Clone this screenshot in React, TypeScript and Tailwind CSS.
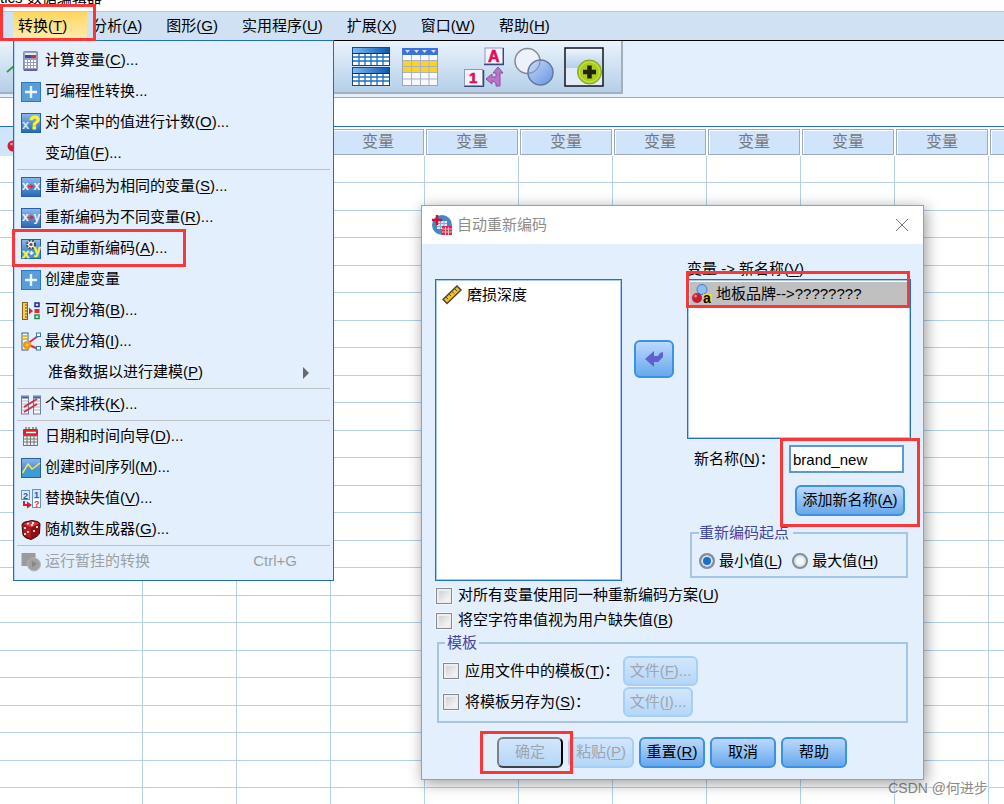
import { Fragment, useState } from "react";
import type { ReactNode } from "react";
import clsx from "clsx";

interface MnemonicProps {
  text: string;
  k?: string;
  tail?: string;
}

// Label with an underlined access key, e.g. 转换(T)
function Mnemonic({ text, k, tail }: MnemonicProps) {
  return (
    <span className="whitespace-nowrap">
      {text}
      {k && (
        <>
          (<u className="underline decoration-1 underline-offset-2">{k}</u>)
        </>
      )}
      {tail}
    </span>
  );
}

// Menu icons
function Icon({ children, className }: { children: ReactNode; className?: string }) {
  return (
    <svg viewBox="0 0 20 20" className={clsx("size-5 shrink-0", className)} aria-hidden="true">
      {children}
    </svg>
  );
}

function BlueTile({ children }: { children: ReactNode }) {
  return (
    <Icon>
      <defs>
        <linearGradient id="tile" x1="0" y1="0" x2="0" y2="1">
          <stop offset="0" stopColor="#8db8ea" />
          <stop offset="1" stopColor="#2468b4" />
        </linearGradient>
      </defs>
      <rect x="0.5" y="0.5" width="19" height="19" fill="url(#tile)" stroke="#2460ae" />
      {children}
    </Icon>
  );
}

function CalculatorIcon() {
  return (
    <Icon>
      <rect x="2.5" y="0.5" width="14" height="19" rx="1" fill="#9a9cc8" stroke="#8a8cba" />
      <rect x="4" y="2" width="11" height="5" fill="#f4e8d8" />
      <rect x="4" y="4" width="6" height="3" fill="#2d4f9e" />
      <rect x="10" y="4" width="5" height="3" fill="#d92b25" />
      {[9, 12, 15].map((y) =>
        [4, 7, 10, 13].map((x) => <rect key={`${x}-${y}`} x={x} y={y} width="2" height="2" fill="#fff" />),
      )}
      <path d="M3 19h13" stroke="#56588c" strokeWidth="1.5" />
    </Icon>
  );
}

function PlusIcon() {
  return (
    <Icon>
      <rect x="0.5" y="0.5" width="19" height="19" fill="#5b9dd8" stroke="#2a78c8" />
      <path d="M10 4v12M4 10h12" stroke="#e8f4ff" strokeWidth="2.4" />
    </Icon>
  );
}

function CountIcon() {
  return (
    <BlueTile>
      <text x="1" y="16" fontSize="13" fontWeight="bold" fill="#d5e4f3">x</text>
      <text x="8" y="16" fontSize="18" fontWeight="bold" fill="#fdf22f" stroke="#fdf22f" strokeWidth="0.8">?</text>
    </BlueTile>
  );
}

function RecodeIcon({ to }: { to: string }) {
  return (
    <BlueTile>
      <text x="1" y="13" fontSize="12" fontWeight="bold" fill="#eef2f6">x</text>
      <text x="12.5" y="13" fontSize="12" fontWeight="bold" fill="#eef2f6">{to}</text>
      <path d="M7 9.5h4" stroke="#e02b35" strokeWidth="1.5" />
      <path d="M9.5 7l4 2.5-4 2.5z" fill="#e02b35" />
    </BlueTile>
  );
}

function AutoRecodeIcon() {
  return (
    <BlueTile>
      <rect x="1" y="10" width="18" height="9" fill="#3f95d3" />
      <circle cx="10" cy="5.5" r="4" fill="#f2f2ee" stroke="#454a50" strokeWidth="2" strokeDasharray="2 1.2" />
      <circle cx="10" cy="5.5" r="1.6" fill="#555" />
      <text x="1" y="18.5" fontSize="13" fontWeight="bold" fill="#f7f23a" stroke="#f7f23a" strokeWidth="0.5">x</text>
      <text x="12.5" y="15" fontSize="13" fontWeight="bold" fill="#f7f23a" stroke="#f7f23a" strokeWidth="0.5">y</text>
      <path d="M8.5 14h4M10.5 12v4" stroke="#fff" strokeWidth="1.5" />
    </BlueTile>
  );
}

function VisualBinIcon() {
  return (
    <Icon>
      <rect x="1.5" y="1.5" width="5" height="17" fill="#f5cd55" stroke="#80641c" />
      <path d="M4 4h2M4 7h2M4 10h2M4 13h2M4 16h2" stroke="#6b5312" />
      <path d="M8 6.5l4 3.5-4 3.5z" fill="#cb2936" />
      <rect x="14" y="2" width="4" height="3.5" fill="none" stroke="#1b2a92" strokeWidth="1.5" />
      <rect x="13.5" y="8" width="5" height="4" fill="#e52a3b" />
      <rect x="14" y="14" width="4" height="3.5" fill="none" stroke="#189040" strokeWidth="1.5" />
    </Icon>
  );
}

function OptimalBinIcon() {
  return (
    <Icon>
      <rect x="1" y="1" width="6" height="17" fill="#f8f6ee" stroke="#33639b" />
      <path d="M1.5 4h5M1.5 7h5" stroke="#e5b83d" strokeWidth="2" />
      <path d="M17 4L6 12l11 5" fill="none" stroke="#e02a50" strokeWidth="2" />
      <circle cx="6" cy="13" r="4" fill="#f99312" />
      <circle cx="6" cy="13" r="1.5" fill="#ffe14a" />
      <rect x="15.5" y="1" width="4" height="3.5" fill="#fff" stroke="#3774b5" />
      <rect x="15.5" y="14.5" width="4" height="3.5" fill="#fff" stroke="#3774b5" />
    </Icon>
  );
}

function RankIcon() {
  return (
    <Icon>
      <rect x="0.5" y="1" width="7" height="18" fill="#f5f7fa" stroke="#6b7fa8" />
      <rect x="12.5" y="1" width="7" height="18" fill="#f5f7fa" stroke="#6b7fa8" />
      <path d="M1 2.5h6M13 2.5h6" stroke="#3f5f9d" strokeWidth="2" />
      <path d="M1 6h6M1 9h6M1 12h6M1 15h6M13 6h6M13 9h6M13 12h6M13 15h6" stroke="#aab4c6" />
      <path d="M3 12L16 4M3 17l13-8" stroke="#d42b37" strokeWidth="2" />
    </Icon>
  );
}

function CalendarIcon() {
  return (
    <Icon>
      <path d="M5 0v4M8 0v2M12 0v2M15 0v4" stroke="#8f7a50" strokeWidth="1.5" />
      <rect x="2" y="2" width="15" height="7" rx="1" fill="#d6222d" />
      <path d="M5 5.5h10" stroke="#fff" strokeWidth="1.5" />
      <rect x="2.5" y="9" width="14" height="9.5" fill="#f2f2f2" stroke="#777" />
      <path d="M6 9v9M9.5 9v9M13 9v9M3 12h13M3 15h13" stroke="#777" />
    </Icon>
  );
}

function SeriesIcon() {
  return (
    <BlueTile>
      <rect x="1" y="11" width="18" height="8" fill="#3e9bd4" />
      <path d="M1.5 15L7 6l4 5 3-2 5-4" fill="none" stroke="#f1ee49" strokeWidth="1.5" />
    </BlueTile>
  );
}

function MissingIcon() {
  return (
    <Icon>
      <rect x="0.5" y="1.5" width="8" height="9" fill="#dfeaf6" stroke="#5e94d0" />
      <rect x="11.5" y="0.5" width="8" height="18" fill="#fff" stroke="#5e94d0" />
      <rect x="12" y="1" width="7" height="9" fill="#d5e5f5" />
      <text x="2" y="9.5" fontSize="9" fontWeight="bold" fill="#1f5baa">2</text>
      <text x="13" y="9" fontSize="9" fontWeight="bold" fill="#1f5baa">1</text>
      <text x="13" y="18" fontSize="9" fontWeight="bold" fill="#e52a37">?</text>
      <path d="M3 12v4h4" fill="none" stroke="#d3202f" strokeWidth="2" />
      <path d="M6 12.5l5 3.5-5 3.5z" fill="#d3202f" />
    </Icon>
  );
}

function DiceIcon() {
  return (
    <Icon>
      <path d="M1 5Q1 3 4 2l7-1.5Q18 1 19 3.5L18.5 13Q18 16 10 19.5 3 18 2 15z" fill="#8c1014" stroke="#3f0a0b" />
      <path d="M2 4l9-3 7 2.5-8 4z" fill="#dd3d41" />
      <path d="M1.5 5l8.500 3v10.5L3 15z" fill="#b81a20" />
      {[[7, 3.5], [12, 3], [11, 5], [4, 8], [7, 12], [4, 14], [13, 11], [16, 7]].map(([x, y]) => (
        <circle key={`${x}-${y}`} cx={x} cy={y} r="1.1" fill="#fff" />
      ))}
    </Icon>
  );
}

function PendingIcon() {
  return (
    <Icon>
      <rect x="0.5" y="1" width="14" height="13" fill="#9b9b9b" />
      <circle cx="13" cy="12.5" r="6.5" fill="#a0a0a0" stroke="#b8b8b8" />
      <path d="M11 9l5 3-5 3z" fill="#858585" />
    </Icon>
  );
}

interface MenuEntry extends MnemonicProps {
  icon?: ReactNode;
  submenu?: boolean;
  shortcut?: string;
  disabled?: boolean;
}

const MENU_GROUPS: MenuEntry[][] = [
  [
    { text: "计算变量", k: "C", tail: "...", icon: <CalculatorIcon /> },
    { text: "可编程性转换", tail: "...", icon: <PlusIcon /> },
    { text: "对个案中的值进行计数", k: "O", tail: "...", icon: <CountIcon /> },
    { text: "变动值", k: "F", tail: "..." },
  ],
  [
    { text: "重新编码为相同的变量", k: "S", tail: "...", icon: <RecodeIcon to="x" /> },
    { text: "重新编码为不同变量", k: "R", tail: "...", icon: <RecodeIcon to="y" /> },
    { text: "自动重新编码", k: "A", tail: "...", icon: <AutoRecodeIcon /> },
    { text: "创建虚变量", icon: <PlusIcon /> },
    { text: "可视分箱", k: "B", tail: "...", icon: <VisualBinIcon /> },
    { text: "最优分箱", k: "I", tail: "...", icon: <OptimalBinIcon /> },
    { text: "准备数据以进行建模", k: "P", submenu: true },
  ],
  [{ text: "个案排秩", k: "K", tail: "...", icon: <RankIcon /> }],
  [
    { text: "日期和时间向导", k: "D", tail: "...", icon: <CalendarIcon /> },
    { text: "创建时间序列", k: "M", tail: "...", icon: <SeriesIcon /> },
    { text: "替换缺失值", k: "V", tail: "...", icon: <MissingIcon /> },
    { text: "随机数生成器", k: "G", tail: "...", icon: <DiceIcon /> },
  ],
  [{ text: "运行暂挂的转换", shortcut: "Ctrl+G", disabled: true, icon: <PendingIcon /> }],
];

function TransformMenu() {
  return (
    <div
      role="menu"
      className="absolute top-10 left-[13px] z-10 w-[321px] border border-[#1d6fc0] bg-[#e3effc] pt-1 pb-[3px] shadow-[inset_1px_0_0_#b9d4f1]"
    >
      {MENU_GROUPS.map((group, i) => (
        <Fragment key={i}>
          {i > 0 && <hr className="mx-[3px] border-t border-[#bdc1c6] first-of-type:mb-px" />}
          {group.map((item) => (
            <button
              key={item.text}
              role="menuitem"
              disabled={item.disabled}
              className="flex h-[31px] w-full items-center gap-1 pr-6 pl-[7px] text-left text-black disabled:text-[#9c9fa3]"
            >
              {item.icon ?? <span className={clsx("h-5 shrink-0", item.submenu ? "w-[23px]" : "w-5")} />}
              <span className="flex-1">
                <Mnemonic text={item.text} k={item.k} tail={item.tail} />
              </span>
              {item.shortcut && <span className="pr-3">{item.shortcut}</span>}
              {item.submenu && (
                <svg viewBox="0 0 6 12" className="h-3 w-1.5" aria-hidden="true">
                  <path d="M0 0l6 6-6 6z" fill="#66696d" />
                </svg>
              )}
            </button>
          ))}
        </Fragment>
      ))}
    </div>
  );
}

const MENU_BAR = [
  { text: "转换", k: "T" },
  { text: "分析", k: "A" },
  { text: "图形", k: "G" },
  { text: "实用程序", k: "U" },
  { text: "扩展", k: "X" },
  { text: "窗口", k: "W" },
  { text: "帮助", k: "H" },
];

function MenuBar() {
  return (
    <nav className="flex h-[30px] shrink-0 border-t border-b border-t-[#b6c8dc] border-b-black bg-[#cfe1f2] pl-[13px]">
      {MENU_BAR.map((m, i) => (
        <button
          key={m.text}
          className={clsx("pl-[5px]", i === 0 ? "bg-linear-to-b from-[#ffd65c] to-[#ffecb0] pr-5" : "pr-[19px]")}
        >
          <Mnemonic text={m.text} k={m.k} />
        </button>
      ))}
    </nav>
  );
}

// Toolbar icons
function SplitFileIcon() {
  const block = (y: number) => (
    <g key={y}>
      <rect x="0.5" y={y + 0.5} width="37" height="18" fill="#fff" stroke="#16488f" />
      <rect x="1" y={y + 1} width="36" height="5" fill="url(#bar)" />
      <path
        d={`M1 ${y + 10}h36M1 ${y + 14}h36M7 ${y + 6}v12M13 ${y + 6}v12M19 ${y + 6}v12M25 ${y + 6}v12M31 ${y + 6}v12`}
        stroke="#1d6ec2"
        strokeWidth="1.3"
      />
      <path d={`M0 ${y + 6.5}h38`} stroke="#162f62" />
    </g>
  );
  return (
    <svg viewBox="0 0 38 40" className="h-10 w-[38px]" aria-hidden="true">
      <defs>
        <linearGradient id="bar">
          <stop offset="0" stopColor="#7dbcf1" />
          <stop offset="1" stopColor="#0a58b4" />
        </linearGradient>
      </defs>
      {block(0)}
      {block(20)}
    </svg>
  );
}

function SelectRowsIcon() {
  return (
    <svg viewBox="0 0 36 38" className="h-[38px] w-9" aria-hidden="true">
      <rect x="0.5" y="0.5" width="35" height="37" fill="#f6f8fb" stroke="#9aa5b8" />
      <rect width="36" height="7" fill="#3d72d6" />
      <path d="M3 2h5l-2.5 3zM12 2h5l-2.5 3zM20 2h5l-2.5 3zM29 2h5l-2.5 3z" fill="#cfe0fb" />
      <rect x="1" y="13" width="34" height="5" fill="#fbd324" />
      <rect x="1" y="19" width="34" height="5" fill="#fbd324" />
      <path d="M1 12.5h34M1 18.5h34M1 24.5h34M1 31h34M9.5 7v30M18.5 7v30M27 7v30" stroke="#aab2c2" />
    </svg>
  );
}

function ValueLabelsIcon() {
  return (
    <svg viewBox="0 0 40 40" className="size-10" aria-hidden="true">
      <rect x="21" y="1" width="18" height="16" fill="#f3f5fb" stroke="#8b9ab8" />
      <path d="M20 17.5h20M39.5 1v16M0 39.5h20M19.5 23v16" stroke="#344a7c" strokeWidth="1.5" />
      <rect x="0.5" y="22.5" width="18" height="16" fill="#f3f5fb" stroke="#8b9ab8" />
      <text x="24" y="14.5" fontSize="16" fontWeight="bold" fill="#e30b5c" stroke="#e30b5c" strokeWidth="0.6">A</text>
      <text x="5" y="36" fontSize="15" fontWeight="bold" fill="#e30b5c" stroke="#e30b5c" strokeWidth="0.6">1</text>
      <path d="M34 20l5 6h-3v13h-4v-3l-3-2h-1v3l-6-5 6-5v3h4v-4h-3z" fill="#b876c8" stroke="#8d4ba5" />
    </svg>
  );
}

function UseSetsIcon() {
  return (
    <svg viewBox="0 0 40 40" className="size-10" aria-hidden="true">
      <defs>
        <linearGradient id="venn" x1="0" y1="0" x2="1" y2="1">
          <stop offset="0" stopColor="#c7d8f8" />
          <stop offset="1" stopColor="#5688e2" />
        </linearGradient>
      </defs>
      <circle cx="13.5" cy="14" r="12.5" fill="#edf2fa" stroke="#848a95" strokeWidth="1.5" />
      <circle cx="26.5" cy="25.5" r="12.5" fill="url(#venn)" fillOpacity="0.85" stroke="#64799e" strokeWidth="1.5" />
      <path d="M14 26.5a12.5 12.5 0 0 0 12-12.5" fill="none" stroke="#848a95" />
    </svg>
  );
}

function AddPanelIcon() {
  return (
    <svg viewBox="0 0 40 40" className="size-10" aria-hidden="true">
      <defs>
        <linearGradient id="sky" x1="0" y1="0" x2="0" y2="1">
          <stop offset="0" stopColor="#ecf4fc" />
          <stop offset="1" stopColor="#b4cfea" />
        </linearGradient>
      </defs>
      <rect x="1" y="1" width="38" height="38" fill="#e1ecf8" stroke="#121519" strokeWidth="1.5" />
      <rect x="2" y="2" width="36" height="19" fill="url(#sky)" />
      <circle cx="25.5" cy="25" r="12" fill="#a9cc1d" stroke="#7ea30f" />
      <circle cx="25.5" cy="25" r="10" fill="none" stroke="#d0e65a" />
      <path d="M25.5 18.5v13M19 25h13" stroke="#20240f" strokeWidth="4.5" />
    </svg>
  );
}

function Toolbar() {
  return (
    <div className="h-[57px] shrink-0 border-b border-[#a5a8ac] bg-[#e3effc]">
      <div className="flex h-[53px] w-[623px] items-center border-r-2 border-b-2 border-[#a4afbc] bg-linear-to-b from-[#eaf3fc] to-[#b5cfe8]">
        <svg viewBox="0 0 20 20" className="mr-[332px] size-5" aria-hidden="true">
          <path d="M7 15l7-6" stroke="#3a9c42" strokeWidth="2" />
        </svg>
        <div className="flex items-center gap-2.5">
          <SplitFileIcon />
          <span className="pl-0.5">
            <SelectRowsIcon />
          </span>
          <span className="ml-4">
            <ValueLabelsIcon />
          </span>
          <UseSetsIcon />
          <AddPanelIcon />
        </div>
      </div>
    </div>
  );
}

const COLUMNS = Array.from({ length: 10 }, (_, i) => i);
const ROWS = Array.from({ length: 24 }, (_, i) => i);

function DataGrid() {
  return (
    <div className="min-h-0 flex-1 overflow-hidden border-t border-[#1d6fc0] bg-white">
      <table className="w-[1083px] table-fixed border-separate border-spacing-0">
        <thead>
          <tr className="h-[29px]">
            <th className="w-[143px] bg-[#d0e4fb] p-0">
              <svg viewBox="0 0 12 12" className="mt-2 ml-[7px] size-3" aria-hidden="true">
                <circle cx="6" cy="6" r="5.5" fill="#cf1f36" />
                <circle cx="4.5" cy="4" r="1.5" fill="#f08a96" />
              </svg>
            </th>
            {COLUMNS.map((c) => (
              <th key={c} className="w-[94px] px-px pt-0.5 pb-px font-normal text-[#75797e]">
                <div className="h-[26px] border border-[#9dabc1] bg-[#d0e4fb] text-base leading-6 shadow-[inset_1px_1px_0_#fff]">
                  {c < 9 && "变量"}
                </div>
              </th>
            ))}
          </tr>
        </thead>
        <tbody>
          {ROWS.map((r) => (
            <tr key={r} className="h-[27px] even:h-7">
              <td className="border-r border-b border-[#b4d0ea] p-0" />
              {COLUMNS.map((c) => (
                <td key={c} className="border-r border-b border-[#b4d0ea] p-0" />
              ))}
            </tr>
          ))}
        </tbody>
      </table>
    </div>
  );
}

function DialogButton({
  children,
  className,
  disabled,
  label,
}: {
  children: ReactNode;
  className?: string;
  disabled?: boolean;
  label?: string;
}) {
  return (
    <button
      aria-label={label}
      disabled={disabled}
      className={clsx(
        "flex items-center justify-center rounded-md border-2 whitespace-nowrap",
        disabled
          ? "bg-linear-to-b from-[#d3e6fc] to-[#b5d6f8] text-[#9da5ae]"
          : "border-[#3b92e3] bg-linear-to-b from-[#bbd9fb] to-[#67a8ec] text-black",
        className,
      )}
    >
      {children}
    </button>
  );
}

function CheckRow({ className, ...label }: MnemonicProps & { className?: string }) {
  return (
    <label className={clsx("flex items-center gap-1.5", className)}>
      <input
        type="checkbox"
        className="size-4 shrink-0 appearance-none border border-[#85898f] bg-linear-to-br from-[#c9cbcd] to-white shadow-[inset_0_0_0_2px_#eceef0,0_0_0_1px_#f4f8fc] checked:bg-[#3b7fc8]"
      />
      <Mnemonic {...label} />
    </label>
  );
}

function OrderRadio({
  checked,
  onChange,
  ...label
}: MnemonicProps & { checked: boolean; onChange: () => void }) {
  return (
    <label className="flex items-center gap-1">
      <input
        type="radio"
        name="order"
        checked={checked}
        onChange={onChange}
        className="size-4 shrink-0 appearance-none rounded-full border-2 border-[#848c94] bg-[#f4f8fb] shadow-[inset_0_0_0_2px_#d3e3ee] checked:bg-[#1c6fc6]"
      />
      <Mnemonic {...label} />
    </label>
  );
}

function RecodeDialog() {
  const [name, setName] = useState("brand_new");
  const [order, setOrder] = useState("min");

  return (
    <section
      role="dialog"
      aria-label="自动重新编码"
      className="absolute top-[205px] left-[421px] z-20 w-[503px] border border-[#9b9fa4] bg-[#e3effc] shadow-[2px_3px_14px_rgba(0,0,0,0.4)]"
    >
      <header className="flex h-[38px] items-center bg-white pr-3.5 pl-2.5">
        <svg viewBox="0 0 20 20" className="size-5" aria-hidden="true">
          <circle cx="10" cy="10" r="10" fill="#4a86bd" />
          <path d="M5 6h10v8H5z" fill="#d8e9f6" />
          <path d="M5 8.5h10M5 11.5h10M8.5 6v8M12 6v8" stroke="#7badd5" />
          <path d="M5 0v10M0 5h10" stroke="#d0103a" strokeWidth="2.5" />
          <rect x="10" y="11" width="10" height="9" fill="#d02c4d" />
          <path d="M10 14h10M10 17h10M13.5 12v8M16.5 12v8" stroke="#f3b6c2" />
        </svg>
        <h2 className="flex-1 pl-[5px] text-[#8d8d8d]">自动重新编码</h2>
        <button aria-label="关闭">
          <svg viewBox="0 0 14 14" className="size-3.5" aria-hidden="true">
            <path d="M1 1l12 12M13 1L1 13" stroke="#777" />
          </svg>
        </button>
      </header>

      <div className="flex pt-3.5 pr-3 pl-[13px]">
        <ul className="mt-[21px] h-[302px] w-[187px] border border-[#1f71c1] bg-white p-px shadow-[inset_0_0_0_1px_#a5caee]">
          <li className="flex h-7 items-center gap-[5px] pl-[5px]">
            <svg viewBox="0 0 20 20" className="size-5" aria-hidden="true">
              <path d="M1 14.500L15 1l4 4L5 18.500z" fill="#f0c02c" stroke="#4c472c" strokeWidth="1.5" />
              <path d="M4 12l2 2M7 9l2 2M10 6.5l2 2M13 4l2 2" stroke="#4c472c" />
            </svg>
            磨损深度
          </li>
        </ul>

        <DialogButton label="移动" className="mt-[82px] ml-3 h-[38px] w-10">
          <svg viewBox="0 0 18 16" className="h-4 w-[18px]" aria-hidden="true">
            <path d="M0 8l9-8v5h4l2-3 3-1v5l-5 5H9v5z" fill="#6260cf" />
          </svg>
        </DialogButton>

        <div className="ml-[13px] flex flex-1 flex-col">
          <div className="h-[21px] leading-[21px]">
            <Mnemonic text="变量 -> 新名称" k="V" />
          </div>
          <ul className="h-40 border border-[#1f71c1] bg-white p-0.5 shadow-[inset_0_0_0_1px_#a5caee]">
            <li className="flex h-6 items-center gap-1 bg-[#c0c0c0] pl-0.5">
              <svg viewBox="0 0 20 20" className="size-5" aria-hidden="true">
                <circle cx="10" cy="5.5" r="5" fill="#8fbdee" stroke="#3b7dc9" />
                <circle cx="5" cy="14" r="5" fill="#c91c30" />
                <circle cx="3.5" cy="12" r="1.5" fill="#ee8088" />
                <rect x="11" y="10" width="9" height="9" fill="#f4d437" />
                <text x="11" y="18.5" fontSize="14" fontWeight="bold" fill="#000">a</text>
              </svg>
              {"地板品牌-->????????"}
            </li>
          </ul>
          <div className="mt-1.5 flex items-center justify-between pr-[7px] pl-[7px]">
            <label htmlFor="new-name">
              <Mnemonic text="新名称" k="N" tail="：" />
            </label>
            <input
              id="new-name"
              value={name}
              onChange={(e) => setName(e.target.value)}
              className="h-7 w-[115px] border-2 border-[#5b98d4] bg-white px-0.5 outline-none"
            />
          </div>
          <DialogButton className="mt-3 mr-1.5 h-[31px] w-[110px] self-end">
            <Mnemonic text="添加新名称" k="A" />
          </DialogButton>
          <fieldset className="mx-[3px] mt-2 border-2 border-[#a5c5e5] px-[7px] pt-1">
            <legend className="pr-1 leading-[18px] text-[#4346a0]">重新编码起点</legend>
            <div className="flex h-[30px] items-center gap-2.5">
              <OrderRadio text="最小值" k="L" checked={order === "min"} onChange={() => setOrder("min")} />
              <OrderRadio text="最大值" k="H" checked={order === "max"} onChange={() => setOrder("max")} />
            </div>
          </fieldset>
        </div>
      </div>

      <div className="pt-0.5 pl-3.5">
        <CheckRow text="对所有变量使用同一种重新编码方案" k="U" className="h-[25px]" />
        <CheckRow text="将空字符串值视为用户缺失值" k="B" className="h-[25px]" />
      </div>

      <fieldset className="mx-[15px] mt-px flex flex-col gap-px border-2 border-[#a5c5e5] px-1 pt-1 pb-1">
        <legend className="ml-0.5 px-0.5 leading-[18px] text-[#4346a0]">模板</legend>
        <div className="flex items-center">
          <CheckRow text="应用文件中的模板" k="T" tail="：" className="w-[180px]" />
          <DialogButton disabled className="h-[30px] w-[75px] border-[#a5cff7]">
            <Mnemonic text="文件" k="F" tail="..." />
          </DialogButton>
        </div>
        <div className="flex items-center">
          <CheckRow text="将模板另存为" k="S" tail="：" className="w-[180px]" />
          <DialogButton disabled className="h-[30px] w-[70px] border-[#a5cff7]">
            <Mnemonic text="文件" k="I" tail="..." />
          </DialogButton>
        </div>
      </fieldset>

      <footer className="flex gap-[5px] pt-3.5 pb-[11px] pl-[75px]">
        <DialogButton disabled className="h-[31px] w-[66px] border-t-[#7a8188] border-r-black border-b-[#3c4248] border-l-[#7a8188]">
          确定
        </DialogButton>
        <DialogButton disabled className="h-[31px] w-[66px] border-[#a5cff7]">
          <Mnemonic text="粘贴" k="P" />
        </DialogButton>
        <DialogButton className="h-[31px] w-[66px]">
          <Mnemonic text="重置" k="R" />
        </DialogButton>
        <DialogButton className="h-[31px] w-[66px]">取消</DialogButton>
        <DialogButton className="h-[31px] w-[66px]">帮助</DialogButton>
      </footer>
    </section>
  );
}

// Red frames that mark the steps of the tutorial
const MARKS = [
  "left-0 top-1 h-[37px] w-24",
  "left-3 top-[229px] h-[38px] w-[174px]",
  "left-[686px] top-[271px] h-[37px] w-[224px]",
  "left-[780px] top-[438px] h-[89px] w-[140px]",
  "left-[480px] top-[731px] h-[43px] w-[93px]",
];

export default function App() {
  return (
    <main className="relative flex h-screen flex-col overflow-hidden bg-white font-['Liberation_Sans','Noto_Sans_CJK_SC',sans-serif] text-[15px] text-black">
      <div className="flex h-[11px] shrink-0 items-end overflow-hidden pb-1.5">
        <h1 className="leading-[15px] whitespace-nowrap">tics 数据编辑器</h1>
      </div>
      <MenuBar />
      <Toolbar />
      <div className="h-7 shrink-0 bg-white" />
      <DataGrid />
      <TransformMenu />
      <RecodeDialog />
      {MARKS.map((m) => (
        <div key={m} className={clsx("pointer-events-none absolute z-30 border-3 border-[#fb3636]", m)} />
      ))}
      <p className="absolute right-4 bottom-1.5 text-sm text-[#8a8a8a] [text-shadow:1px_1px_0_#fff]">CSDN @何进步</p>
    </main>
  );
}
